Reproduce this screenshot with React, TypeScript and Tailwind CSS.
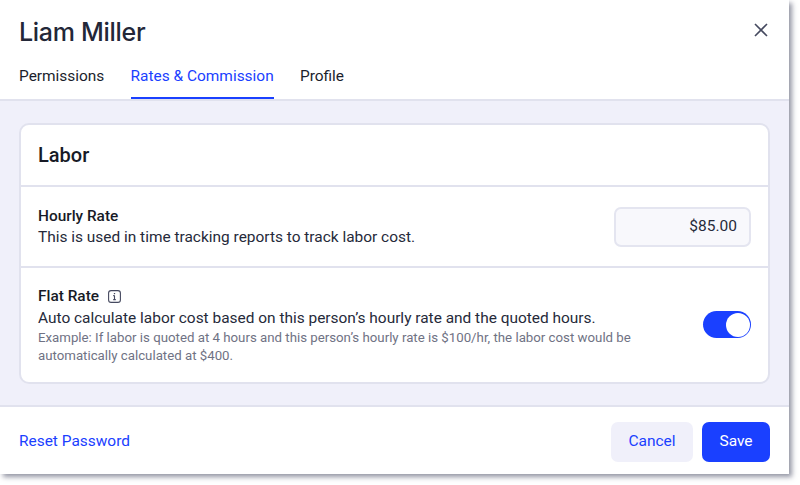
export default function App() {
  return (
    <div className="h-[485px] w-[800px] bg-white font-['Roboto',sans-serif]">
      <div className="flex h-[474px] w-[789px] flex-col bg-white shadow-[3px_3px_5px_rgba(60,64,90,0.55)]">
        <div className="h-[101px] border-b-2 border-[#e1e2ee] px-[19px]">
          <div className="flex h-[60px] items-center justify-between pt-[4px]">
            <h1 className="font-['Inter',sans-serif] text-[25px] font-medium leading-none tracking-[-0.3px] text-[#232738]">Liam Miller</h1>
            <svg className="mr-[1px] -mt-[4px]" width="16" height="16" viewBox="0 0 16 16" fill="none" stroke="#45495f" strokeWidth="1.6">
              <path d="M2 2l12 12M14 2L2 14" />
            </svg>
          </div>
          <div className="flex h-[39px] gap-[26.25px] text-[15.45px] text-[#1b1e2c]">
            <button className="h-[39px] pb-[5px]">Permissions</button>
            <button className="h-[39px] border-b-2 border-[#1a40ff] pb-[3px] text-[#1a40ff]">Rates &amp; Commission</button>
            <button className="h-[39px] pb-[5px]">Profile</button>
          </div>
        </div>
        <div className="flex-1 bg-[#f0f0fa] px-[19px] pt-[22px]">
          <div className="h-[261px] rounded-[10px] border-2 border-[#e1e2ee] bg-white">
            <div className="flex h-[62px] items-center border-b-2 border-[#e1e2ee] px-[17px]">
              <h2 className="text-[20px] font-medium text-[#171a26]">Labor</h2>
            </div>
            <div className="flex h-[81px] items-center justify-between border-b-2 border-[#e1e2ee] px-[17px]">
              <div>
                <div className="text-[15.4px] font-medium leading-[20px] text-[#171a26]">Hourly Rate</div>
                <div className="text-[15.45px] leading-[22px] text-[#262a3a]">This is used in time tracking reports to track labor cost.</div>
              </div>
              <div className="flex h-[40px] w-[137px] items-center justify-end rounded-[7px] border-2 border-[#e4e5f0] bg-[#f8f8fc] pr-[12px] text-[15.5px] text-[#262a3a]">$85.00</div>
            </div>
            <div className="flex items-center justify-between px-[17px] pt-[18px]">
              <div>
                <div className="flex items-center gap-[9px] text-[15.4px] font-medium leading-[20px] text-[#171a26]">
                  Flat Rate
                  <svg width="13" height="13" viewBox="0 0 13 13" fill="none" stroke="#45495f" strokeWidth="1.1">
                    <rect x="0.6" y="0.6" width="11.8" height="11.8" rx="2.5" />
                    <path d="M6.5 5.6v4M5.2 9.6h2.6M5.2 5.6h1.3" />
                    <path d="M6.5 3v1.2" strokeWidth="1.3" />
                  </svg>
                </div>
                <div className="mt-[1px] text-[15.45px] leading-[22px] text-[#262a3a]">Auto calculate labor cost based on this person’s hourly rate and the quoted hours.</div>
                <div className="w-[610px] text-[13.25px] leading-[18px] text-[#6f7284]">Example: If labor is quoted at 4 hours and this person’s hourly rate is $100/hr, the labor cost would be automatically calculated at $400.</div>
              </div>
              <div className="-mt-[2px] flex h-[27px] w-[48px] items-center justify-end rounded-full bg-[#1a40ff] p-[1.5px]">
                <div className="h-[24px] w-[24px] rounded-full bg-white" />
              </div>
            </div>
          </div>
        </div>
        <div className="flex h-[69px] items-center justify-between border-t-2 border-[#e1e2ee] px-[19px] pt-[2px]">
          <a className="text-[15.45px] text-[#1a40ff]">Reset Password</a>
          <div className="flex gap-[9px] text-[15.5px]">
            <button className="h-[40px] w-[82px] rounded-[7px] bg-[#f0f0fa] text-[#1a40ff]">Cancel</button>
            <button className="h-[40px] w-[68px] rounded-[7px] bg-[#1a40ff] text-white">Save</button>
          </div>
        </div>
      </div>
    </div>
  );
}
